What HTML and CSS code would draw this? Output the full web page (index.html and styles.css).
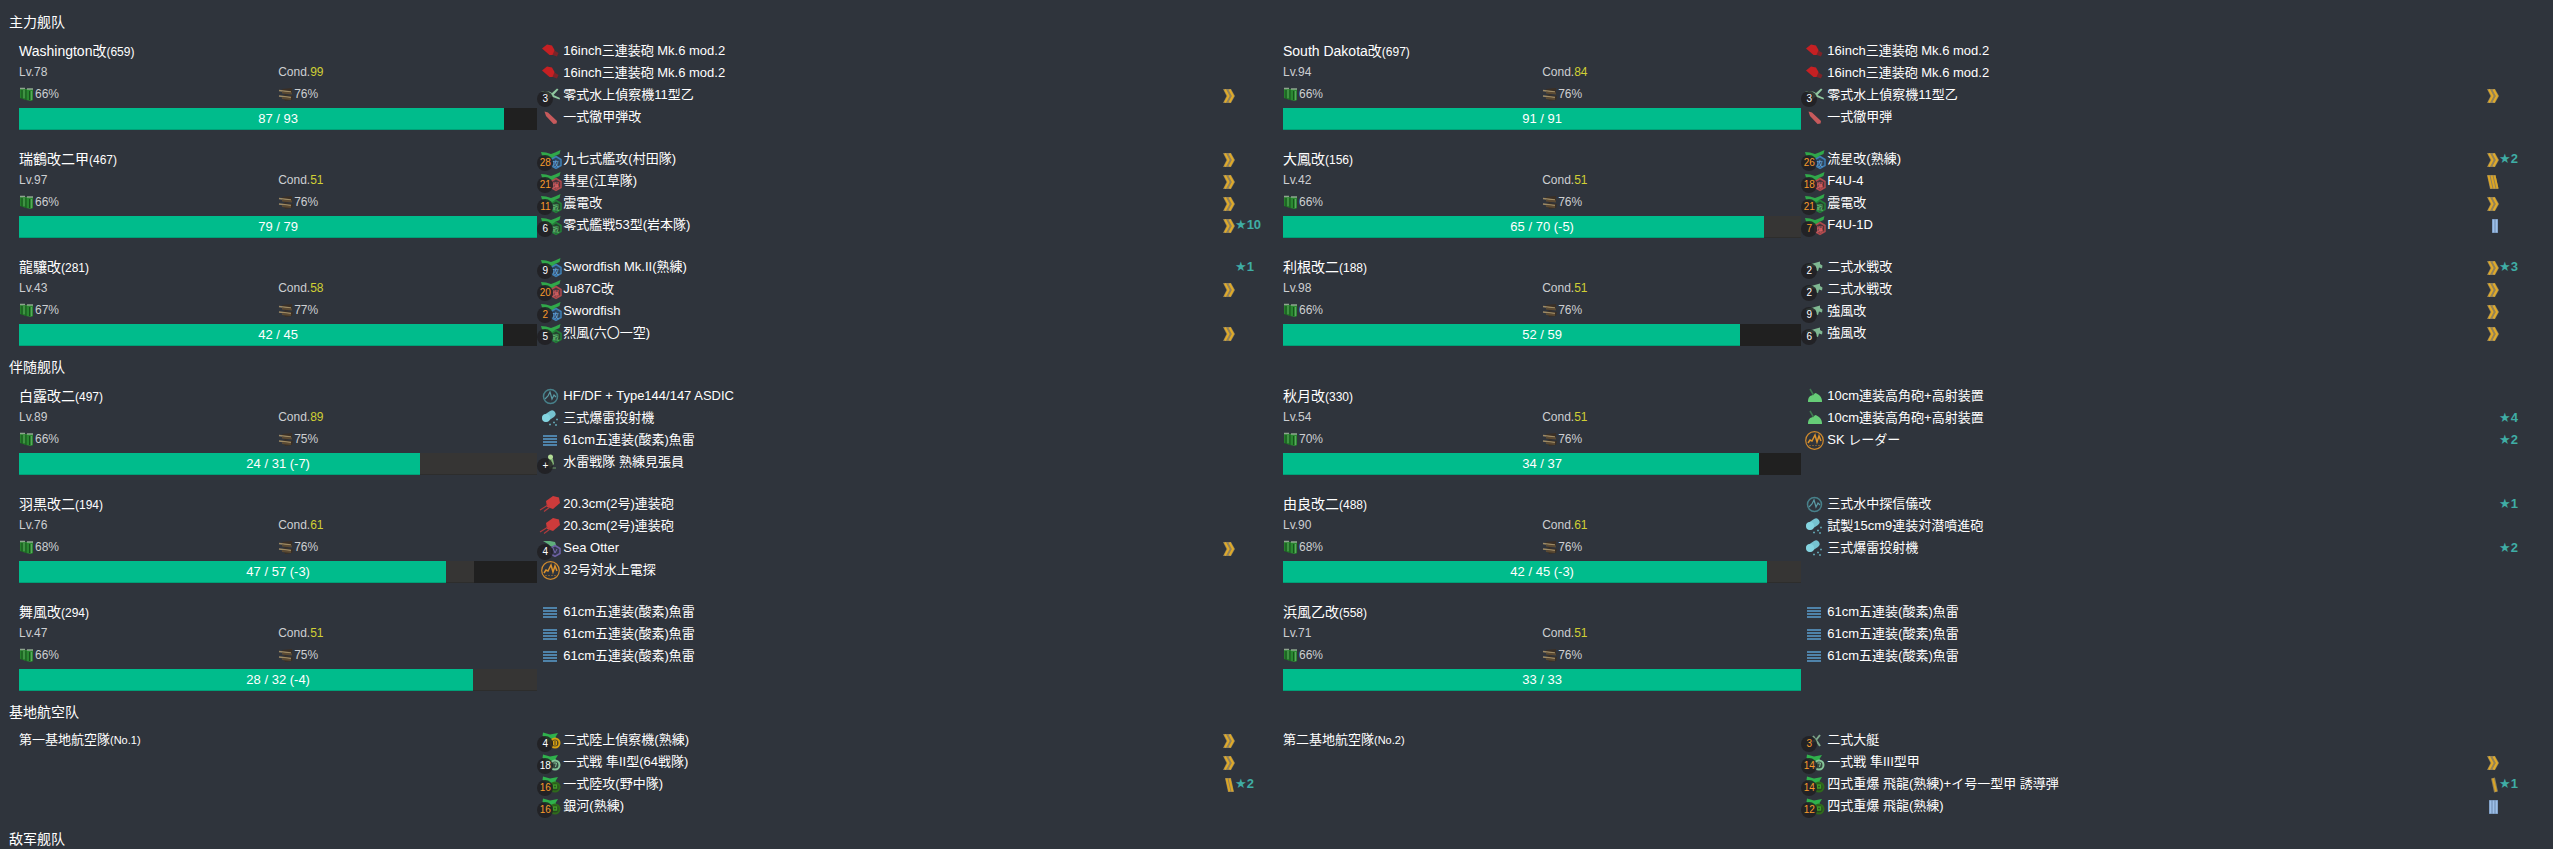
FILE: index.html
```html
<!DOCTYPE html>
<html lang="ja">
<head>
<meta charset="utf-8">
<title>舰队</title>
<link rel="stylesheet" href="styles.css">
<script src="fleet.js" defer></script>
</head>
<body>
<svg class="defs" aria-hidden="true">
  <defs>
    <symbol id="gun-l" viewBox="0 0 26 22"><path fill="#7d2328" d="M15 9 21.500 13 20 16.500 13 14z"/><path fill="#c62023" d="M5 8.500 10 4.500 15 5.500 17.500 10 15.500 15 12.500 15z"/></symbol>
    <symbol id="gun-m" viewBox="0 0 26 22"><path fill="#cd3b3b" d="M9 8 16 3 22 4.500 23 10 16 16 10 14z"/><path stroke="#b03a3c" stroke-width="1.200" d="M11 12 3 17M13 14 7 18.500"/></symbol>
    <symbol id="gun-aa" viewBox="0 0 26 22"><path fill="#66cc77" d="M7 17c0-5 2-6 4.500-7l3-2c3 1 7 4 6.500 9z"/><path stroke="#3f7a50" stroke-width="1.500" d="M9 4l3.500 6"/></symbol>
    <symbol id="shell" viewBox="0 0 26 22"><path fill="#c75a5c" d="M7.500 5.500 11 6.500 20 15 19.500 17.500 16.500 18 9 10z"/></symbol>
    <symbol id="seaplane" viewBox="0 0 26 22"><path fill="#8fc79f" d="M4 7l8 .5 3 1.500 5-4.500 1.500 1-5 5.500 6.500 3-.5 1.500-8-3-3 3-1-1 1.500-3.500z"/></symbol>
    <symbol id="seafighter" viewBox="0 0 26 22"><path fill="#7fb892" d="M5 9l7-1.500 7-2v2.500l2.500 1.500-.5 3-3-1-1 3.500-2-.5v-4L6 11z"/></symbol>
    <symbol id="boat" viewBox="0 0 26 22"><path fill="none" stroke="#7fa98c" stroke-width="2" d="M12 7l3 4 4 6M19 6l-4 5-6 3"/></symbol>
    <symbol id="plane" viewBox="0 0 26 22"><path fill="#30a84a" d="M4 4 9 4.500 14 6 18 4.500 23.500 2 22.500 6 18 8 17 11 11 11 9 8.500 5 7.500z"/></symbol>
    <symbol id="p-att" viewBox="0 0 26 22"><use href="#plane"/><path class="hex" fill="#2b455f" stroke="#3f7fb5" d="M19 8.500l5 3v6l-5 3-5-3v-6z"/><text x="15" y="18" fill="#6fb4ea">攻</text></symbol>
    <symbol id="p-bomb" viewBox="0 0 26 22"><use href="#plane"/><path class="hex" fill="#4c343b" stroke="#b04a4e" d="M19 8.500l5 3v6l-5 3-5-3v-6z"/><text x="15" y="18" fill="#f0686c">爆</text></symbol>
    <symbol id="p-fig" viewBox="0 0 26 22"><use href="#plane"/><path class="hex" fill="#24452f" stroke="#228038" d="M19 8.500l5 3v6l-5 3-5-3v-6z"/><text x="15" y="18" fill="#62c878">戦</text></symbol>
    <symbol id="otter" viewBox="0 0 26 22"><path fill="#5fae7c" d="M6 4h7l5 1 1 3-5 2-3-3z"/><path class="hex" fill="#353850" stroke="#6f62a6" d="M18 8.500l5 3v5l-5 3-5-3v-5z"/><path fill="none" stroke="#7568ad" d="M16 11l2 5 2-4"/></symbol>
    <symbol id="landplane" viewBox="0 0 26 22"><path fill="#2fb14c" d="M6 3.500l7 2 8-1.500-2.500 4 2 4-6.500-1-5 3 .5-4.500-4-2.500z"/></symbol>
    <symbol id="l-rec" viewBox="0 0 26 22"><use href="#landplane"/><circle class="ring" cx="18" cy="14" r="4.500" fill="#4c4324" stroke="#d6a010"/><path stroke="#d6a010" d="M16.500 12h3v4h-3zM16.500 14h3" fill="none"/></symbol>
    <symbol id="l-fig" viewBox="0 0 26 22"><use href="#landplane"/><circle class="ring" cx="18" cy="14" r="4.500" fill="#34483f" stroke="#86c49a"/><path stroke="#86c49a" d="M16.500 12h3l-1 4" fill="none"/></symbol>
    <symbol id="l-att" viewBox="0 0 26 22"><use href="#landplane"/><circle class="ring" cx="18" cy="14" r="4.500" fill="#27461f" stroke="#2f6a1c"/><path stroke="#3f9a28" stroke-width="1.500" d="M16.500 12h3v3h-3z" fill="none"/></symbol>
    <symbol id="sonar" viewBox="0 0 26 22"><circle cx="13.500" cy="11.500" r="7" fill="none" stroke="#47808a" stroke-width="1.500"/><path fill="none" stroke="#5b9aa4" stroke-width="1.200" d="M8 14l3-3 2-4 2 7 2-4 2 2"/></symbol>
    <symbol id="radar" viewBox="0 0 26 22"><circle cx="13.500" cy="11.500" r="8.800" fill="none" stroke="#cf8a2e" stroke-width="1.200"/><path fill="none" stroke="#dc922c" stroke-width="1.500" d="M7 14l2-3 2 1 3-6 2 7 2-6 2 5"/><path stroke="#7d5c30" stroke-dasharray="2 1" d="M8 16.500h11"/></symbol>
    <symbol id="depth" viewBox="0 0 26 22"><path stroke="#76c3d0" stroke-width="7" stroke-linecap="round" d="M9 11l6-4"/><circle cx="9" cy="11" r="4" fill="#84d4e0"/><path stroke="#5f9fac" stroke-width="1.500" d="M12 17.500h2M16 15.500h2M19 12.500h2M18 18h2"/></symbol>
    <symbol id="torpedo" viewBox="0 0 26 22"><path stroke="#4f83aa" stroke-width="2" d="M6 7h14M6 10h14M6 13h14M6 16h14"/></symbol>
    <symbol id="lookout" viewBox="0 0 26 22"><circle cx="13.500" cy="6" r="2.500" fill="#b3dc96"/><path fill="#86b877" d="M12 8h4l1 5-3 3-3-1z"/><path stroke="#5a7a5a" stroke-width="1.500" d="M12 17h7"/></symbol>
    <symbol id="lv7" viewBox="0 0 12 22"><path fill="#92825a" d="M0 5h8l4 7-4 7H0l3.500-7z"/><path fill="none" stroke="#e0aa28" stroke-width="2" d="M2 5.500 5.500 12 2 18.500M6.500 5.500 10 12 6.500 18.500"/></symbol>
    <symbol id="lv6" viewBox="0 0 12 22"><path fill="#8e7f5c" d="M0 5h8.500l3 14H3z"/><path stroke="#dba524" stroke-width="2" d="M1.500 5.500l3 13M4.500 5.500l3 13M7.500 5.500l3 13"/></symbol>
    <symbol id="lv5" viewBox="0 0 12 22"><path fill="#8e7f5c" d="M2 5h6l3 14H5z"/><path stroke="#dba524" stroke-width="2" d="M3.500 5.500l3 13M6.500 5.500l3 13"/></symbol>
    <symbol id="lv4" viewBox="0 0 12 22"><path stroke="#8e7f5c" stroke-width="4" d="M6 5l3 14"/><path stroke="#dba524" stroke-width="2" d="M6 5.500l3 13"/></symbol>
    <symbol id="lv3" viewBox="0 0 12 22"><path fill="#6b87ab" d="M2 5h9v14H2z"/><path stroke="#9dbfe8" stroke-width="2" d="M3.500 5.500v13M6.500 5.500v13M9.500 5.500v13"/></symbol>
    <symbol id="lv2" viewBox="0 0 12 22"><path fill="#6b87ab" d="M5 5h6v14H5z"/><path stroke="#9dbfe8" stroke-width="2" d="M6.500 5.500v13M9.500 5.500v13"/></symbol>
    <symbol id="fuel" viewBox="0 0 16 16"><path fill="#26802c" d="M1 3h6v11L1 12z"/><path fill="#2b8832" d="M7 3h7v11l-2 1-5-1z"/><path stroke="#8fa68f" stroke-width="1.500" d="M1 2.500h5M8 3h6"/><path stroke="#17521c" d="M3 4v9M7 4v10M10.500 5v9"/><path stroke="#5aa45d" d="M5 4v8M12.500 5v9"/></symbol>
    <symbol id="ammo" viewBox="0 0 16 16"><path fill="#3a2f25" d="M4 3l10-1v5L7 9zM5 9l10 1-1 4-7 1z"/><path stroke="#9d8a64" stroke-width="1.500" d="M1 4.500l12 1.500M1 10l12 1.500"/><path stroke="#5b4a33" stroke-width="2" d="M4 6.500l10 1M4 12l9 1"/></symbol>
  </defs>
</svg>
<main id="fleets"></main>
</body>
</html>
```
FILE: styles.css
```css
* { box-sizing: border-box; }
body {
  margin: 0;
  background: #2f343c;
  color: #fff;
  font: 13px/22px "Liberation Sans", "Noto Sans CJK JP", sans-serif;
  overflow: hidden;
}
.defs { position: absolute; width: 0; height: 0; }
main { padding: 12px 16px 0 9px; }
h2, h3, p, ul { margin: 0; padding: 0; font-weight: 400; }
h2 {
  font: 14px/21px "Liberation Sans", "Noto Sans CJK SC", sans-serif;
  height: 21px;
}
.grid { display: grid; grid-template-columns: 1fr 1fr; }
.ship {
  display: grid;
  grid-template-columns: 5fr 7fr;
  align-items: start;
  padding: 7px 10px 11px;
}
.base { padding: 6px 10px 12px; }
h3 { font-size: 14px; line-height: 22px; height: 22px; }
h3 small { font-size: 12px; }
.base h3 { font-size: 13px; }
.base small { font-size: 11px; }
.row {
  display: grid;
  grid-template-columns: 1fr 1fr;
  height: 20px;
  font-size: 12px;
  line-height: 20px;
  color: #cdcfd2;
}
.supply { height: 24px; line-height: 24px; }
.row span { display: flex; align-items: center; }
.row svg { width: 16px; height: 16px; }
.row em { font-style: normal; color: #d0d034; }
.hp {
  position: relative;
  display: flex;
  height: 22px;
  margin-top: 2px;
  background: #202020;
}
.hp i { background: #00bc8c; box-shadow: inset 0 -1px rgba(0, 0, 0, .15); }
.hp i.lost { background: #363534; }
.hp b {
  position: absolute;
  inset: 0;
  text-align: center;
  font-weight: 400;
}
.items { list-style: none; }
.items li { display: flex; height: 22px; position: relative; }
.eq { width: 26px; height: 22px; flex: none; }
symbol text { font: 7px "Noto Sans CJK JP", sans-serif; }
.hex { stroke-width: 1.5px; }
.ring { stroke-width: 2px; }
.count {
  position: absolute;
  left: 0;
  bottom: -1px;
  width: 16px;
  height: 16px;
  border-radius: 50%;
  background: rgba(32, 32, 34, .85);
  font-size: 10px;
  line-height: 16px;
  text-align: center;
}
.full { color: #fff; }
.less { color: #f79a2c; }
.name { flex: 1; white-space: nowrap; }
.lv { width: 12px; height: 22px; }
.star {
  width: 28px;
  color: #3fada5;
  font-weight: 700;
  font-family: "Liberation Sans", "DejaVu Sans", sans-serif;
}
```
FILE: fleet.js
```js
// Equipment: [icon, name, plane count ("!" prefix = reduced), proficiency, stars]
const torp = ["torpedo", "61cm五連装(酸素)魚雷"];
const gun16 = ["gun-l", "16inch三連装砲 Mk.6 mod.2"];
const aa10 = ["gun-aa", "10cm連装高角砲+高射装置"];
// Ships: [name, id, level, cond, fuel, ammo, hp, max, lost, items]
const fleets = [
  ["主力舰队", [
    ["Washington改", 659, 78, 99, 66, 76, 87, 93, 0, [gun16, gun16, ["seaplane", "零式水上偵察機11型乙", "3", 7], ["shell", "一式徹甲弾改"]]],
    ["South Dakota改", 697, 94, 84, 66, 76, 91, 91, 0, [gun16, gun16, ["seaplane", "零式水上偵察機11型乙", "3", 7], ["shell", "一式徹甲弾"]]],
    ["瑞鶴改二甲", 467, 97, 51, 66, 76, 79, 79, 0, [["p-att", "九七式艦攻(村田隊)", "!28", 7], ["p-bomb", "彗星(江草隊)", "!21", 7], ["p-fig", "震電改", "!11", 7], ["p-fig", "零式艦戦53型(岩本隊)", "6", 7, 10]]],
    ["大鳳改", 156, 42, 51, 66, 76, 65, 70, 5, [["p-att", "流星改(熟練)", "!26", 7, 2], ["p-bomb", "F4U-4", "!18", 6], ["p-fig", "震電改", "!21", 7], ["p-bomb", "F4U-1D", "!7", 2]]],
    ["龍驤改", 281, 43, 58, 67, 77, 42, 45, 0, [["p-att", "Swordfish Mk.II(熟練)", "9", 0, 1], ["p-bomb", "Ju87C改", "!20", 7], ["p-att", "Swordfish", "!2"], ["p-fig", "烈風(六〇一空)", "5", 7]]],
    ["利根改二", 188, 98, 51, 66, 76, 52, 59, 0, [["seafighter", "二式水戦改", "2", 7, 3], ["seafighter", "二式水戦改", "2", 7], ["seafighter", "強風改", "9", 7], ["seafighter", "強風改", "6", 7]]]
  ]],
  ["伴随舰队", [
    ["白露改二", 497, 89, 89, 66, 75, 24, 31, 7, [["sonar", "HF/DF + Type144/147 ASDIC"], ["depth", "三式爆雷投射機"], torp, ["lookout", "水雷戦隊 熟練見張員", "+"]]],
    ["秋月改", 330, 54, 51, 70, 76, 34, 37, 0, [aa10, [...aa10, "", 0, 4], ["radar", "SK レーダー", "", 0, 2]]],
    ["羽黒改二", 194, 76, 61, 68, 76, 47, 57, 3, [["gun-m", "20.3cm(2号)連装砲"], ["gun-m", "20.3cm(2号)連装砲"], ["otter", "Sea Otter", "4", 7], ["radar", "32号対水上電探"]]],
    ["由良改二", 488, 90, 61, 68, 76, 42, 45, 3, [["sonar", "三式水中探信儀改", "", 0, 1], ["depth", "試製15cm9連装対潜噴進砲"], ["depth", "三式爆雷投射機", "", 0, 2]]],
    ["舞風改", 294, 47, 51, 66, 75, 28, 32, 4, [torp, torp, torp]],
    ["浜風乙改", 558, 71, 51, 66, 76, 33, 33, 0, [torp, torp, torp]]
  ]],
  ["基地航空队", [
    ["第一基地航空隊", "No.1", [["l-rec", "二式陸上偵察機(熟練)", "4", 7], ["l-fig", "一式戦 隼II型(64戦隊)", "18", 7], ["l-att", "一式陸攻(野中隊)", "!16", 5, 2], ["l-att", "銀河(熟練)", "!16"]]],
    ["第二基地航空隊", "No.2", [["boat", "二式大艇", "!3"], ["l-fig", "一式戦 隼III型甲", "!14", 7], ["l-att", "四式重爆 飛龍(熟練)+イ号一型甲 誘導弾", "!14", 4, 1], ["l-att", "四式重爆 飛龍(熟練)", "!12", 3]]]
  ]],
  ["敌军舰队", []]
];

const icon = (cls, id) => `<svg class="${cls}"><use href="#${id}"/></svg>`;

const item = ([ic, name, n = "", lv = 0, star = 0]) => `<li>${icon("eq", ic)}${
  n ? `<span class="count ${n[0] === "!" ? "less" : "full"}">${n.replace("!", "")}</span>` : ""
}<span class="name">${name}</span>${lv ? icon("lv", "lv" + lv) : ""}<span class="star">${star ? "★" + star : ""}</span></li>`;

const items = list => `<ul class="items">${list.map(item).join("")}</ul>`;

const ship = ([name, id, lv, cond, fuel, ammo, hp, max, lost, list]) => `<article class="ship"><div>
<h3>${name}<small>(${id})</small></h3>
<p class="row"><span>Lv.${lv}</span><span>Cond.<em>${cond}</em></span></p>
<p class="row supply"><span>${icon("", "fuel")}${fuel}%</span><span>${icon("", "ammo")}${ammo}%</span></p>
<div class="hp"><i style="width:${hp / max * 100}%"></i><i class="lost" style="width:${lost / max * 100}%"></i><b>${hp} / ${max}${lost ? ` (-${lost})` : ""}</b></div>
</div>${items(list)}</article>`;

const base = ([name, id, list]) =>
  `<article class="ship base"><h3>${name}<small>(${id})</small></h3>${items(list)}</article>`;

document.getElementById("fleets").innerHTML = fleets.map(([title, units]) =>
  `<section><h2 lang="zh-Hans">${title}</h2><div class="grid">${
    units.map(u => (u.length === 3 ? base(u) : ship(u))).join("")
  }</div></section>`).join("");
```
